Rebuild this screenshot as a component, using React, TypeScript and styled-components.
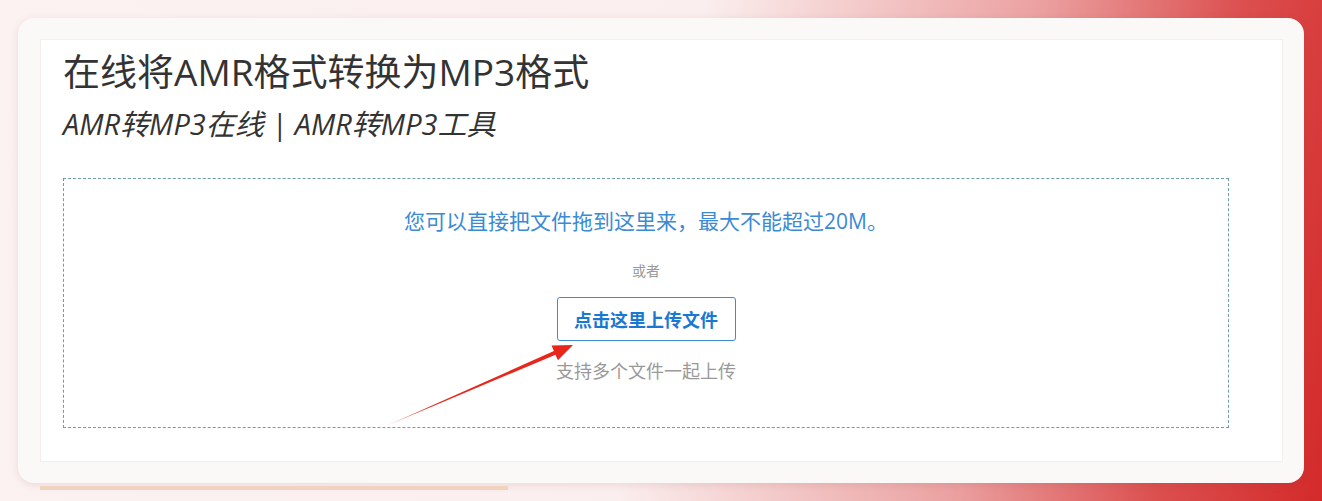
import React from 'react';
import styled, { createGlobalStyle } from 'styled-components';

const GlobalStyle = createGlobalStyle`
  html, body {
    margin: 0;
    padding: 0;
  }
  body {
    font-family: "Open Sans", "Noto Sans CJK SC", sans-serif;
    color: #333;
  }
`;

const Page = styled.div`
  min-height: 501px;
  box-sizing: border-box;
  padding: 18px 18px 0 18px;
  background: linear-gradient(100deg, #fcf2f2 0%, #fbeeee 50%, #eba0a0 74%, #dc5050 88%, #d42a2a 100%);
  overflow: hidden;
`;

const Card = styled.div`
  background: #fbf8f8;
  border-radius: 16px;
  padding: 21px 21px 21px 22px;
  box-shadow: 0 2px 8px rgba(120, 60, 60, 0.12);
`;

const Panel = styled.div`
  background: #fff;
  border: 1px solid #f4eeee;
  padding: 6px 53px 33px 22px;
`;

const Title = styled.h1`
  margin: 0;
  font-size: 37px;
  font-weight: 400;
  line-height: 52px;
  color: #333;
`;

const Subtitle = styled.h2`
  margin: 4px 0 0;
  font-size: 29px;
  font-weight: 400;
  font-style: italic;
  line-height: 44px;
  color: #333;
`;

const DropZone = styled.div`
  position: relative;
  margin-top: 32px;
  height: 250px;
  box-sizing: border-box;
  border: 1px dashed #6f9ea6;
  display: flex;
  flex-direction: column;
  align-items: center;
  padding-top: 28px;
`;

const DropHint = styled.p`
  margin: 0;
  font-size: 21px;
  line-height: 28px;
  color: #3a8ad4;
`;

const OrText = styled.span`
  margin-top: 26px;
  font-size: 14px;
  line-height: 20px;
  color: #999;
`;

const UploadButton = styled.button`
  margin-top: 16px;
  width: 179px;
  height: 44px;
  border: 1px solid #3d8bd0;
  border-radius: 3px;
  background: #fff;
  color: #1a78d2;
  font-family: inherit;
  font-size: 18px;
  font-weight: 700;
  cursor: pointer;
`;

const MultiNote = styled.span`
  margin-top: 17px;
  font-size: 18px;
  line-height: 26px;
  color: #999;
`;

const ArrowLayer = styled.svg`
  position: absolute;
  left: 0;
  top: 0;
  width: 100%;
  height: 100%;
  pointer-events: none;
`;

const ProgressTrack = styled.div`
  margin: 3px 0 0 22px;
  width: 468px;
  height: 4px;
  background: #f0d3bf;
`;

export default function App() {
  return (
    <>
      <GlobalStyle />
      <Page>
        <Card>
          <Panel>
            <Title>在线将AMR格式转换为MP3格式</Title>
            <Subtitle>AMR转MP3在线 | AMR转MP3工具</Subtitle>
            <DropZone>
              <DropHint>您可以直接把文件拖到这里来，最大不能超过20M。</DropHint>
              <OrText>或者</OrText>
              <UploadButton>点击这里上传文件</UploadButton>
              <MultiNote>支持多个文件一起上传</MultiNote>
              <ArrowLayer>
                <defs>
                  <linearGradient id="arrowFade" x1="322" y1="247" x2="509" y2="166" gradientUnits="userSpaceOnUse">
                    <stop offset="0" stopColor="#e8a0a0" />
                    <stop offset="0.25" stopColor="#e8261c" />
                    <stop offset="1" stopColor="#e8261c" />
                  </linearGradient>
                </defs>
                <polygon
                  points="322,247 489.9,172.1 487.5,166.6 509,166 493.9,181.2 491.5,175.7"
                  fill="url(#arrowFade)"
                />
              </ArrowLayer>
            </DropZone>
          </Panel>
        </Card>
        <ProgressTrack />
      </Page>
    </>
  );
}
